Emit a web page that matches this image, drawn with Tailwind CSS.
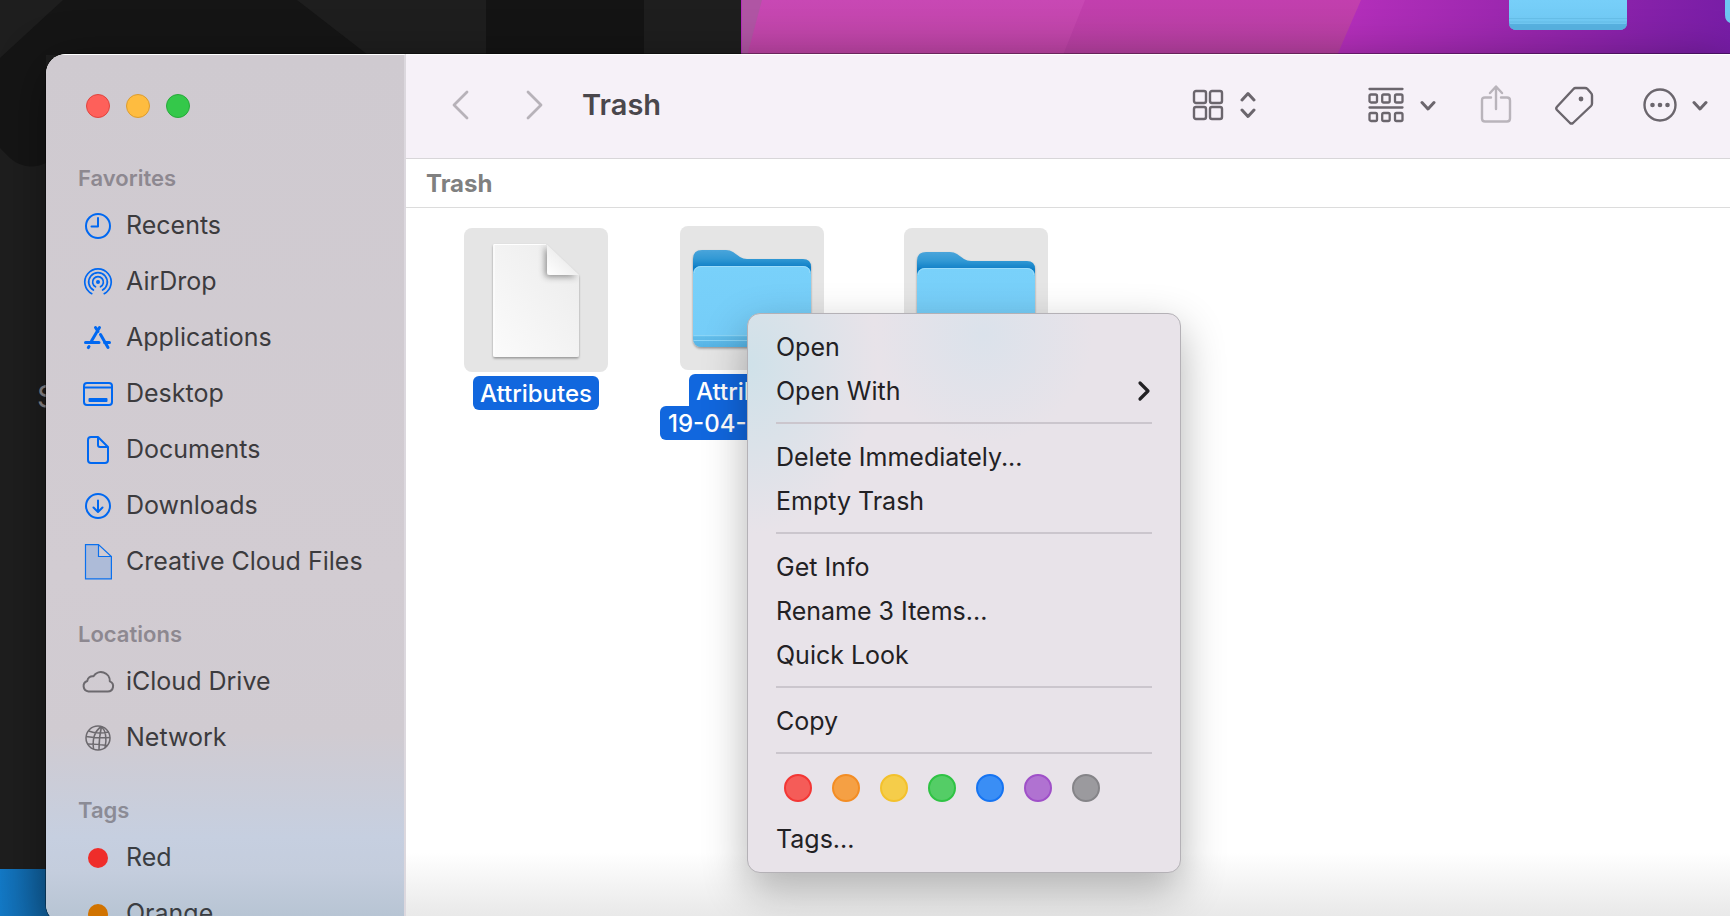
<!DOCTYPE html>
<html lang="en">
<head>
<meta charset="utf-8">
<title>Trash</title>
<script src="https://cdn.jsdelivr.net/npm/@tailwindcss/browser@4"></script>
</head>
<body class="font-['Inter','Noto_Sans',sans-serif]">
<div class="relative flex h-screen flex-col overflow-hidden bg-[#1277c5] pt-[54px] pl-[46px]">

  <!-- Desktop behind the Finder window -->
  <svg class="absolute inset-0 h-full w-full" viewBox="0 0 1730 916" preserveAspectRatio="xMinYMin slice" aria-hidden="true">
    <defs>
      <linearGradient id="purple" gradientUnits="userSpaceOnUse" x1="1340" y1="0" x2="1730" y2="54"><stop offset="0" stop-color="#b52fbb"/><stop offset=".5" stop-color="#9726ad"/><stop offset="1" stop-color="#771da6"/></linearGradient>
      <linearGradient id="pink" x1="0" y1="0" x2="0" y2="1"><stop offset="0" stop-color="#c848b4"/><stop offset="1" stop-color="#bd44a4"/></linearGradient>
      <linearGradient id="pink2" x1="0" y1="0" x2="0" y2="1"><stop offset="0" stop-color="#c23fae"/><stop offset="1" stop-color="#b5409f"/></linearGradient>
      <linearGradient id="blueback" x1="0" y1="0" x2="1" y2="0"><stop offset="0" stop-color="#1379c6"/><stop offset="1" stop-color="#10609d"/></linearGradient>
      <linearGradient id="front" x1="0" y1="0" x2="0" y2="1"><stop offset="0" stop-color="#77cff9"/><stop offset="1" stop-color="#6fc8f3"/></linearGradient>
    </defs>
    <rect y="869" width="46" height="47" fill="url(#blueback)"/>
    <rect x="46" y="869" width="20" height="47" fill="#10609d"/>
    <rect width="742" height="869" fill="#1e1e1e"/>
    <path d="M63 0H297L368 55H46V163Q26 172 10 158L0 148V58Z" fill="#151515"/>
    <rect x="486" width="158" height="60" fill="#141414"/>
    <rect x="741" width="989" height="60" fill="url(#purple)"/>
    <path d="M742 0H1361L1335 60H742Z" fill="url(#pink2)"/>
    <path d="M742 0H1085L1061 60H742Z" fill="url(#pink)"/>
    <path d="M742 0H762L746 60H742Z" fill="#b055a4"/>
    <path d="M1509 0H1627V22Q1627 30 1619 30H1517Q1509 30 1509 22Z" fill="url(#front)"/>
    <path d="M1509 18.500H1627M1509 22H1627" stroke="#66bfe9"/>
    <path d="M1509 24H1627Q1626 30 1619 30H1517Q1510 30 1509 24Z" fill="#58b3e3"/>
    <path d="M1725 0H1730V23Q1725 21 1725 15Z" fill="#6ec6f2"/>
  </svg>
  <span class="absolute top-[382px] left-[37px] text-[30px] leading-7 text-[#8b898d]" aria-hidden="true">S</span>

  <div class="relative -mb-2 flex min-h-0 flex-1 overflow-hidden rounded-l-[20px] bg-white shadow-[0_0_0_1px_rgba(0,0,0,0.35),0_10px_50px_rgba(0,0,0,0.4)]">

    <!-- Sidebar -->
    <nav aria-label="Sidebar" class="w-[360px] shrink-0 border-t border-r-2 border-t-white border-r-[#dcd8de] bg-[linear-gradient(to_bottom,#cfcad0_0%,#d2ccd2_60%,#d0cbd1_78%,#c6cfe0_90%,#c4cddd_94%,#b5c3d2_100%)] pl-8">
      <div class="flex gap-4 pt-[39px] pl-2">
        <button aria-label="Close" class="size-6 rounded-full border border-[#e0443e] bg-[#fe605a]"></button>
        <button aria-label="Minimize" class="size-6 rounded-full border border-[#dc9c30] bg-[#febc40]"></button>
        <button aria-label="Zoom" class="size-6 rounded-full border border-[#27a93a] bg-[#34c84a]"></button>
      </div>

      <h2 class="mt-[46px] h-7 text-[22px] leading-7 font-semibold text-[#8d8890]">Favorites</h2>
      <ul class="mt-[6px] text-[25px] text-[#3c3b3e]">
        <li><a href="#recents" class="flex h-14 items-center gap-3"><svg class="size-9" viewBox="0 0 36 36" fill="none" stroke="#0068f1" stroke-width="2" stroke-linecap="round" stroke-linejoin="round"><circle cx="20" cy="18" r="12"/><path d="M20 10V18.500H13.500"/></svg>Recents</a></li>
        <li><a href="#airdrop" class="flex h-14 items-center gap-3"><svg class="size-9" viewBox="0 0 36 36" fill="none" stroke="#0068f1" stroke-width="1.700" stroke-linecap="round"><circle cx="20" cy="18" r="2" fill="#0068f1" stroke="none"/><path d="M17.500 22.800A5.400 5.400 0 1 1 22.500 22.800M15.400 26A9.300 9.300 0 1 1 24.600 26M13.800 29.700A13.200 13.200 0 1 1 26.200 29.700"/></svg>AirDrop</a></li>
        <li><a href="#applications" class="flex h-14 items-center gap-3"><svg class="size-9" viewBox="0 0 36 36" fill="none" stroke="#0068f1" stroke-width="3" stroke-linecap="round"><path d="M21.500 7.500L13.500 21M17.500 7.500L20 11.500M22.500 14.500L30 27.500M7.500 22.500H21M26.500 22.500H31.500M11 26.500L10.300 27.600"/></svg>Applications</a></li>
        <li><a href="#desktop" class="flex h-14 items-center gap-3"><svg class="size-9" viewBox="0 0 36 36" fill="none" stroke="#0068f1" stroke-width="2"><rect x="6" y="7" width="28" height="22" rx="3"/><path d="M6 11.500H34"/><rect x="10.500" y="22" width="19" height="4" rx="1" fill="#0068f1" stroke="none"/></svg>Desktop</a></li>
        <li><a href="#documents" class="flex h-14 items-center gap-3"><svg class="size-9" viewBox="0 0 36 36" fill="none" stroke="#0068f1" stroke-width="2" stroke-linejoin="round"><path d="M13 5H20L30 15V28Q30 31 27 31H13Q10 31 10 28V8Q10 5 13 5ZM20 5V13Q20 15 22 15H30"/></svg>Documents</a></li>
        <li><a href="#downloads" class="flex h-14 items-center gap-3"><svg class="size-9" viewBox="0 0 36 36" fill="none" stroke="#0068f1" stroke-width="2" stroke-linecap="round" stroke-linejoin="round"><circle cx="20" cy="18" r="12"/><path d="M20 12.500V23.500M15.500 19.500L20 24L24.500 19.500"/></svg>Downloads</a></li>
        <li><a href="#creative-cloud" class="flex h-14 items-center gap-3"><svg class="size-9" viewBox="0 0 36 36" fill="#adbbd8" stroke="#0a70ee" stroke-width="1.200"><path d="M7.500 .600H20.500L33.400 12.500V34.800H7.500ZM20.500 .600V12.500H33.400" /></svg>Creative Cloud Files</a></li>
      </ul>

      <h2 class="mt-[30px] h-7 text-[22px] leading-7 font-semibold text-[#8d8890]">Locations</h2>
      <ul class="mt-[6px] text-[25px] text-[#3c3b3e]">
        <li><a href="#icloud" class="flex h-14 items-center gap-3"><svg class="size-9 overflow-visible" viewBox="0 0 36 36" fill="none" stroke="#6c696e" stroke-width="2" stroke-linejoin="round"><path d="M10.500 27.500H29.800A5.300 5.300 0 0 0 31.800 17.300A8.800 8.800 0 0 0 15.500 12.300A5.200 5.200 0 0 0 9.300 17A5.400 5.400 0 0 0 10.500 27.500Z"/></svg>iCloud Drive</a></li>
        <li><a href="#network" class="flex h-14 items-center gap-3"><svg class="size-9" viewBox="0 0 36 36" fill="none" stroke="#6c696e" stroke-width="1.500"><circle cx="20" cy="18" r="12"/><path d="M23.500 6.500Q13.500 13 15.500 29M23.500 6.500Q21 17 21 30M23.500 6.500Q30 13 27 28M10.500 11Q19 14.500 31 12M8 16.500Q20 18.500 32 17.500M9.500 24Q19 24 29.500 25.500"/></svg>Network</a></li>
      </ul>

      <h2 class="mt-[30px] h-7 text-[22px] leading-7 font-semibold text-[#8b8b95]">Tags</h2>
      <ul class="mt-[6px] text-[25px] text-[#3a3d42]">
        <li><a href="#red" class="flex h-14 items-center gap-3"><span class="mr-[6px] ml-[10px] size-5 rounded-full bg-[#ef2d2a]"></span>Red</a></li>
        <li><a href="#orange" class="flex h-14 items-center gap-3"><span class="mr-[6px] ml-[10px] size-5 rounded-full bg-[#d17300]"></span>Orange</a></li>
      </ul>
    </nav>

    <main class="flex min-w-0 flex-1 flex-col">
      <!-- Toolbar -->
      <header class="flex h-[105px] shrink-0 items-center border-t border-b border-t-white border-b-[#d8d6d9] bg-[#f6f1f8] pr-[22px] pb-[3px] pl-[43px] text-[#6b666d]">
        <button aria-label="Back" class="text-[#b7b2b9]"><svg class="h-8 w-6" viewBox="0 0 24 32" fill="none" stroke="currentColor" stroke-width="2.800" stroke-linecap="round" stroke-linejoin="round"><path d="M18 3L5 16L18 29"/></svg></button>
        <button aria-label="Forward" class="ml-12 text-[#b7b2b9]"><svg class="h-8 w-6" viewBox="0 0 24 32" fill="none" stroke="currentColor" stroke-width="2.800" stroke-linecap="round" stroke-linejoin="round"><path d="M7 3L20 16L7 29"/></svg></button>
        <h1 class="ml-[37px] flex-1 text-[29px] font-semibold text-[#4a474c]">Trash</h1>
        <button aria-label="Icon view" class="flex items-center gap-4">
          <svg class="h-8 w-8" viewBox="0 0 32 32" fill="none" stroke="currentColor" stroke-width="2.400"><rect x="2" y="2" width="12" height="12" rx="2"/><rect x="18" y="2" width="12" height="12" rx="2"/><rect x="2" y="18" width="12" height="12" rx="2"/><rect x="18" y="18" width="12" height="12" rx="2"/></svg>
          <svg class="h-8 w-4" viewBox="0 0 16 32" fill="none" stroke="currentColor" stroke-width="3" stroke-linecap="round" stroke-linejoin="round"><path d="M2 11L8 4.500L14 11M2 21L8 27.500L14 21"/></svg>
        </button>
        <button aria-label="Group items" class="ml-[112px] flex items-center gap-4">
          <svg class="h-9 w-9" viewBox="0 0 36 36" fill="none" stroke="currentColor" stroke-width="2.300" stroke-linecap="round"><path d="M1.500 2H34.500M1.500 20.500H34.500"/><rect x="1.500" y="7.500" width="7.500" height="8" rx="1.500"/><rect x="14.200" y="7.500" width="7.500" height="8" rx="1.500"/><rect x="27" y="7.500" width="7.500" height="8" rx="1.500"/><rect x="1.500" y="26" width="7.500" height="8" rx="1.500"/><rect x="14.200" y="26" width="7.500" height="8" rx="1.500"/><rect x="27" y="26" width="7.500" height="8" rx="1.500"/></svg>
          <svg class="size-4" viewBox="0 0 16 16" fill="none" stroke="currentColor" stroke-width="3" stroke-linecap="round" stroke-linejoin="round"><path d="M2 5.500L8 12L14 5.500"/></svg>
        </button>
        <button aria-label="Share" class="ml-11 text-[#b9b4bb]"><svg class="h-10 w-8" viewBox="0 0 32 40" fill="none" stroke="currentColor" stroke-width="2.400" stroke-linecap="round" stroke-linejoin="round"><path d="M11 12.500H5Q2 12.500 2 15.500V33.500Q2 36.500 5 36.500H27Q30 36.500 30 33.500V15.500Q30 12.500 27 12.500H21M16 24V2M10 8L16 1.500L22 8"/></svg></button>
        <button aria-label="Edit tags" class="ml-[42px]"><svg class="size-10" viewBox="0 0 40 40" fill="none" stroke="currentColor" stroke-width="2.400" stroke-linejoin="round"><path d="M21.500 3H31Q32.500 3 33.500 4L37 8Q38 9 38 10.500V18.500Q38 20 37 21L19 38Q17.500 39.200 16 38L3 25Q1.500 23.300 3 21.700L19.500 4Q20.400 3 21.500 3Z"/><circle cx="27" cy="14" r="2.400" fill="currentColor" stroke="none"/></svg></button>
        <button aria-label="More actions" class="ml-12 flex items-center gap-[14px]">
          <svg class="size-9" viewBox="0 0 36 36" fill="none" stroke="currentColor" stroke-width="2.400"><circle cx="18" cy="18" r="15.500"/><g fill="currentColor" stroke="none"><circle cx="10.500" cy="18" r="2.300"/><circle cx="18" cy="18" r="2.300"/><circle cx="25.500" cy="18" r="2.300"/></g></svg>
          <svg class="size-4" viewBox="0 0 16 16" fill="none" stroke="currentColor" stroke-width="3" stroke-linecap="round" stroke-linejoin="round"><path d="M2 5.500L8 12L14 5.500"/></svg>
        </button>
      </header>

      <!-- Path header -->
      <div class="flex h-[49px] shrink-0 items-center border-b border-[#dcdcdc] pt-0.5 pl-5 text-2xl font-bold text-[#808080]">Trash</div>

      <!-- Items -->
      <section aria-label="Items" class="flex flex-1 items-start gap-[72px] bg-linear-to-b from-white from-90% to-[#e6e6e6] pt-5 pl-[58px] text-2xl font-medium text-white">
        <figure class="flex w-36 flex-col items-center">
          <svg class="size-36 rounded-lg bg-[#e5e5e5]" viewBox="0 0 144 144">
            <defs>
              <linearGradient id="paper" x1="0" y1="1" x2="1" y2="0"><stop offset="0" stop-color="#fbfbfb"/><stop offset="1" stop-color="#ebebeb"/></linearGradient>
              <linearGradient id="flap" x1="0" y1="1" x2=".6" y2=".4"><stop offset="0" stop-color="#fff"/><stop offset="1" stop-color="#ececec"/></linearGradient>
              <filter id="soft" x="-20%" y="-20%" width="150%" height="150%"><feDropShadow dx="0" dy="1.500" stdDeviation="1" flood-opacity=".35"/></filter>
              <filter id="fold" x="-40%" y="-40%" width="180%" height="180%"><feDropShadow dx="-2" dy="2" stdDeviation="3" flood-opacity=".4"/></filter>
              <clipPath id="page"><path d="M30 16H82L115 47V127Q115 129 113 129H31Q29 129 29 127V17Z"/></clipPath>
            </defs>
            <path d="M30 16H82L115 47V127Q115 129 113 129H31Q29 129 29 127V17Z" fill="url(#paper)" filter="url(#soft)"/>
            <path d="M30 128V16.500H82" fill="none" stroke="#fff"/>
            <g clip-path="url(#page)"><path d="M83 16L115 47H86Q83 47 83 44Z" fill="url(#flap)" filter="url(#fold)"/></g>
          </svg>
          <figcaption class="mt-1 flex h-[34px] w-[126px] items-center justify-center rounded-md bg-[#1167de] pt-0.5">Attributes</figcaption>
        </figure>
        <figure class="-mt-0.5 flex w-36 flex-col items-center">
          <svg class="size-36 rounded-lg bg-[#e5e5e5]" viewBox="0 0 144 144">
            <defs>
              <linearGradient id="back" gradientUnits="userSpaceOnUse" x1="0" y1="24" x2="0" y2="42"><stop offset="0" stop-color="#4aa5db"/><stop offset=".5" stop-color="#3198d4"/><stop offset="1" stop-color="#0b7cc5"/></linearGradient>
              <linearGradient id="face" x1="0" y1="0" x2="0" y2="1"><stop offset="0" stop-color="#79d1fa"/><stop offset=".85" stop-color="#75cdf8"/><stop offset=".88" stop-color="#62bdea"/><stop offset="1" stop-color="#56b4e6"/></linearGradient>
            </defs>
            <g id="folder" filter="url(#soft)">
              <path d="M13 33Q13 24 22 24H46Q50 24 53 26L60 31Q63 33 67 33H123Q131 33 131 41V70H13Z" fill="url(#back)"/>
              <rect x="13" y="40" width="118" height="81" rx="8" fill="url(#face)"/>
              <path d="M14 47Q14 41 21 40.500H123Q130 41 130 47" fill="none" stroke="#9bdcfa"/>
              <path d="M13.500 109.500H130.500M13.500 114.500H130.500" stroke="#8ad5f7"/>
            </g>
          </svg>
          <figcaption class="mt-1 flex flex-col items-center">
            <span class="flex h-[34px] w-[126px] items-center justify-center rounded-t-md bg-[#1167de] pt-0.5">Attributes</span>
            <span class="-mt-0.5 flex h-[34px] w-[184px] items-center rounded-md bg-[#1167de] px-2 pt-0.5">19-04-</span>
          </figcaption>
        </figure>
        <figure class="ml-2 w-36" aria-label="Folder">
          <svg class="size-36 rounded-lg bg-[#e5e5e5]" viewBox="0 0 144 144"><use href="#folder"/></svg>
        </figure>
      </section>
    </main>
  </div>

  <!-- Context menu -->
  <div role="menu" class="absolute top-[313px] left-[747px] flex w-[434px] flex-col rounded-[13px] border border-[#b4b1b6] bg-[#e8e3e9] bg-[radial-gradient(circle_at_235px_20px,#dbe2eb_0,#dbe2eb00_110px),radial-gradient(ellipse_130px_170px_at_0px_50px,#cfe1e9_0,#cfe1e900_100%)] px-7 pt-3 pb-[10px] text-[25px] text-[#222124] shadow-[0_16px_44px_rgba(0,0,0,0.3)]">
    <button role="menuitem" class="h-11 text-left">Open</button>
    <button role="menuitem" class="flex h-11 items-center justify-between">Open With<svg class="h-6 w-4" viewBox="0 0 16 24" fill="none" stroke="currentColor" stroke-width="3.200" stroke-linecap="round" stroke-linejoin="round"><path d="M4 3L12 11L4 19"/></svg></button>
    <hr class="mt-2 mb-3 border-t-2 border-[#cbc6cd]">
    <button role="menuitem" class="h-11 text-left">Delete Immediately...</button>
    <button role="menuitem" class="h-11 text-left">Empty Trash</button>
    <hr class="mt-2 mb-3 border-t-2 border-[#cbc6cd]">
    <button role="menuitem" class="h-11 text-left">Get Info</button>
    <button role="menuitem" class="h-11 text-left">Rename 3 Items...</button>
    <button role="menuitem" class="h-11 text-left">Quick Look</button>
    <hr class="mt-2 mb-3 border-t-2 border-[#cbc6cd]">
    <button role="menuitem" class="h-11 text-left">Copy</button>
    <hr class="mt-2 mb-3 border-t-2 border-[#cbc6cd]">
    <div class="flex h-[52px] gap-5 pt-2 pl-2">
      <button aria-label="Red" class="size-7 rounded-full border-2 border-[#f33735] bg-[#f55c58]"></button>
      <button aria-label="Orange" class="size-7 rounded-full border-2 border-[#f38d24] bg-[#f5a044]"></button>
      <button aria-label="Yellow" class="size-7 rounded-full border-2 border-[#f3c12c] bg-[#f5cd4a]"></button>
      <button aria-label="Green" class="size-7 rounded-full border-2 border-[#2fc344] bg-[#54cd66]"></button>
      <button aria-label="Blue" class="size-7 rounded-full border-2 border-[#1674f2] bg-[#3a8ef5]"></button>
      <button aria-label="Purple" class="size-7 rounded-full border-2 border-[#9f50c8] bg-[#b072d1]"></button>
      <button aria-label="Gray" class="size-7 rounded-full border-2 border-[#858488] bg-[#9b9a9e]"></button>
    </div>
    <button role="menuitem" class="h-11 text-left">Tags...</button>
  </div>
</div>
</body>
</html>
